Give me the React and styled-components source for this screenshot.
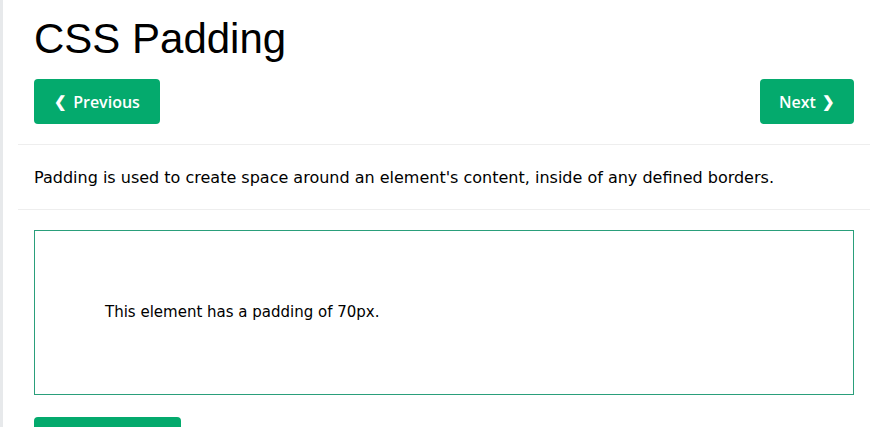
import React from "react";
import styled, { createGlobalStyle } from "styled-components";

const GlobalStyle = createGlobalStyle`
  html, body {
    margin: 0;
    padding: 0;
    background: #fff;
  }
  body {
    font-family: "DejaVu Sans", Verdana, sans-serif;
    font-size: 15px;
    line-height: 1.5;
    color: #000;
  }
`;

const Page = styled.div`
  display: flex;
  min-height: 427px;
  border-left: 3px solid #e7e9eb;
  padding-left: 15px;
  padding-right: 7px;
  overflow: hidden;
`;

const Main = styled.main`
  flex: 1;
  padding: 0 16px;
`;

const Title = styled.h1`
  font-family: "Liberation Sans", Arial, sans-serif;
  font-size: 42px;
  font-weight: 400;
  line-height: 48px;
  margin: 15px 0 16px;
`;

const NavBar = styled.div`
  display: flex;
  justify-content: space-between;
  align-items: center;
`;

const Button = styled.a`
  display: inline-flex;
  align-items: center;
  justify-content: center;
  gap: 6px;
  box-sizing: border-box;
  width: ${(p) => p.$width}px;
  height: 45px;
  background: #04aa6d;
  color: #fff;
  border-radius: 4px;
  font-family: "Open Sans", "Noto Sans", sans-serif;
  font-size: 16px;
  font-weight: 600;
  text-decoration: none;
  cursor: pointer;
`;

const Chevron = styled.span`
  font-size: 15px;
  font-weight: 700;
`;

const Divider = styled.hr`
  border: 0;
  border-top: 1px solid #eee;
  margin: ${(p) => (p.$flush ? 0 : 20)}px -16px 0;
`;

const Intro = styled.p`
  margin: 0;
  padding: 21px 0 19px;
  font-size: 16px;
  line-height: 24px;
`;

const PaddedBox = styled.div`
  margin-top: 20px;
  padding: 70px;
  border: 1px solid #2a9f7b;
`;

const TryButton = styled(Button)`
  margin-top: 22px;
`;

export default function App() {
  return (
    <>
      <GlobalStyle />
      <Page>
        <Main>
          <Title>CSS Padding</Title>
          <NavBar>
            <Button $width={126}>
              <Chevron>❮</Chevron> Previous
            </Button>
            <Button $width={94}>
              Next <Chevron>❯</Chevron>
            </Button>
          </NavBar>
          <Divider />
          <Intro>
            Padding is used to create space around an element's content, inside
            of any defined borders.
          </Intro>
          <Divider $flush />
          <PaddedBox>This element has a padding of 70px.</PaddedBox>
          <TryButton $width={147}>Try it Yourself »</TryButton>
        </Main>
      </Page>
    </>
  );
}
